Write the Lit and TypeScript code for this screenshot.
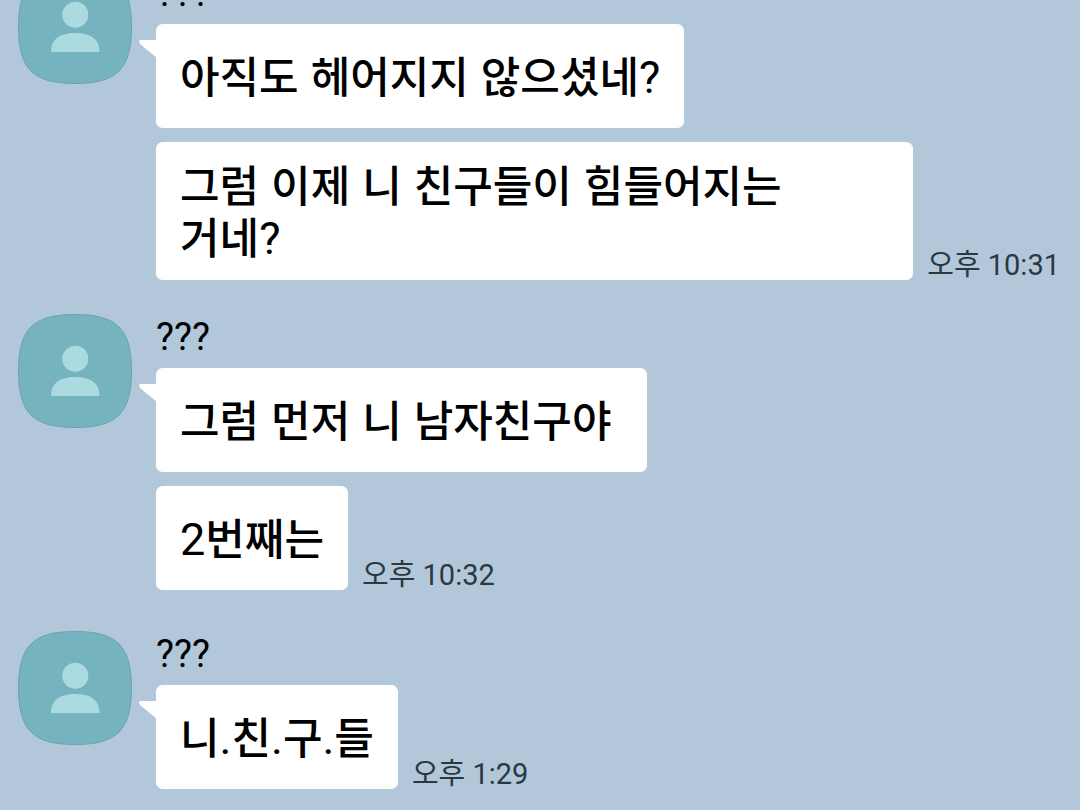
import { LitElement, html, css } from "lit";
import { customElement, property } from "lit/decorators.js";

interface Line { text: string; time?: string; wide?: boolean; }
interface Group { name: string; lines: Line[]; }

const groups: Group[] = [
  { name: "???", lines: [
    { text: "아직도 헤어지지 않으셨네?" },
    { text: "그럼 이제 니 친구들이 힘들어지는 거네?", time: "오후 10:31", wide: true },
  ] },
  { name: "???", lines: [
    { text: "그럼 먼저 니 남자친구야\u00a0" },
    { text: "2번째는", time: "오후 10:32" },
  ] },
  { name: "???", lines: [{ text: "니.친.구.들", time: "오후 1:29" }] },
];

// Latin letters, digits and punctuation are set lighter than the Hangul around them.
const setText = (text: string) =>
  text.split(/([!-~]+)/).map((part) => /^[!-~]+$/.test(part) ? html`<span class="latin">${part}</span>` : part);

@customElement("chat-avatar")
export class ChatAvatar extends LitElement {
  static styles = css`
    :host { display: block; flex: none; }
    svg { display: block; }
  `;
  render() {
    return html`<svg width="114" height="114" viewBox="0 0 114 114" aria-hidden="true">
      <path d="M57 .5C99 .5 113.500 15 113.500 57S99 113.500 57 113.500.5 99 .5 57 15 .5 57 .5Z" fill="#75b4bf" stroke="#68a3b0"/>
      <circle cx="57.300" cy="44.700" r="13" fill="#acdae1"/>
      <path d="M33 82C33 69 42 63 57.300 63S81.500 69 81.500 82Z" fill="#acdae1"/>
    </svg>`;
  }
}

@customElement("chat-group")
export class ChatGroup extends LitElement {
  @property({ attribute: false }) group!: Group;
  static styles = css`
    :host { display: flex; align-items: flex-start; gap: 24px; }
    .body { flex: 1; min-width: 0; }
    .name { margin: 0; height: 54px; font-size: 38px; line-height: 46px; font-weight: 400; }
    .lines { display: flex; flex-direction: column; gap: 7px; }
    .row { display: flex; align-items: flex-end; gap: 14px; padding-bottom: 7px; }
    .row.full { padding-bottom: 0; }
    .bubble { position: relative; box-sizing: border-box; margin: 0; padding: 28px 24px 24px; border-radius: 7px; background: #fff; box-shadow: 0 0 1px #d5e1ec; font-family: "Liberation Sans", "Noto Sans CJK KR", sans-serif; font-size: 43px; line-height: 52px; font-weight: 500; word-break: keep-all; }
    .latin { font-family: Roboto, sans-serif; font-size: 45px; line-height: 1; font-weight: 400; }
    .full .bubble { flex: 1; padding: 19px 120px 15px 24px; }
    .tail { position: absolute; left: -17px; top: 16px; }
    time { flex: none; font-size: 29px; line-height: 30px; color: #2c3841; white-space: nowrap; }
  `;
  render() {
    return html`<chat-avatar></chat-avatar>
      <div class="body">
        <h2 class="name">${this.group.name}</h2>
        <div class="lines">${this.group.lines.map((l, i) => html`<div class="row ${l.wide ? "full" : ""}">
          <p class="bubble">${i === 0 ? html`<svg class="tail" width="18" height="18" viewBox="0 0 18 18" aria-hidden="true"><path d="M2 0H18V18L1 4Q-1 0 2 0Z" fill="#fff"/></svg>` : ""}${setText(l.text)}</p>
          ${l.time ? html`<time>${l.time}</time>` : ""}
        </div>`)}</div>
      </div>`;
  }
}

@customElement("app-root")
export class AppRoot extends LitElement {
  static styles = css`
    :host { display: block; height: 100vh; overflow: hidden; background: #b2c7da; color: #000; font-family: Roboto, "Noto Sans CJK KR", sans-serif; }
    main { display: flex; flex-direction: column; gap: 34px; margin-top: -30px; padding: 0 20px 20px 18px; }
  `;
  render() {
    return html`<main>${groups.map((g) => html`<chat-group .group=${g}></chat-group>`)}</main>`;
  }
}
